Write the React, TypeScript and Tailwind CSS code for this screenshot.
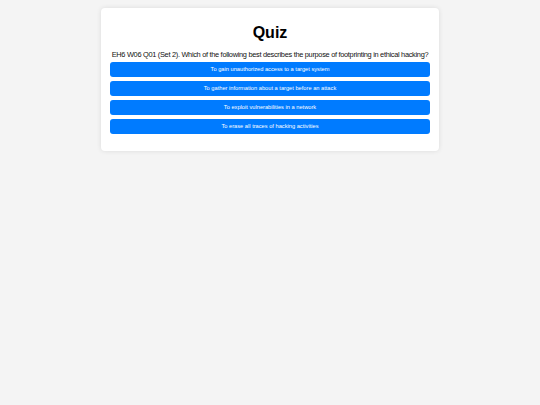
import React from "react";

const options = [
  "To gain unauthorized access to a target system",
  "To gather information about a target before an attack",
  "To exploit vulnerabilities in a network",
  "To erase all traces of hacking activities",
];

export default function App() {
  return (
    <div
      className="min-h-[405px] w-full bg-[#f4f4f4] pt-[8px]"
      style={{ fontFamily: '"Liberation Sans", Arial, sans-serif' }}
    >
      <div className="mx-auto w-[338px] rounded-[4px] bg-white px-[9px] pt-[16px] pb-[17px] shadow-[0_0_5px_rgba(0,0,0,0.1)]">
        <h1 className="text-center text-[16px] font-bold leading-[18px] text-black">Quiz</h1>
        <p className="mt-[8px] whitespace-nowrap text-center text-[7.4px] leading-[10px] tracking-[-0.3px] text-[#111]">
          EH6 W06 Q01 (Set 2). Which of the following best describes the purpose of footprinting in ethical hacking?
        </p>
        <div className="mt-[2px] flex flex-col gap-[4px]">
          {options.map((o) => (
            <button
              key={o}
              className="h-[15px] w-full rounded-[3px] bg-[#007bff] text-center text-[5.7px] leading-[15px] text-white"
            >
              {o}
            </button>
          ))}
        </div>
      </div>
    </div>
  );
}
